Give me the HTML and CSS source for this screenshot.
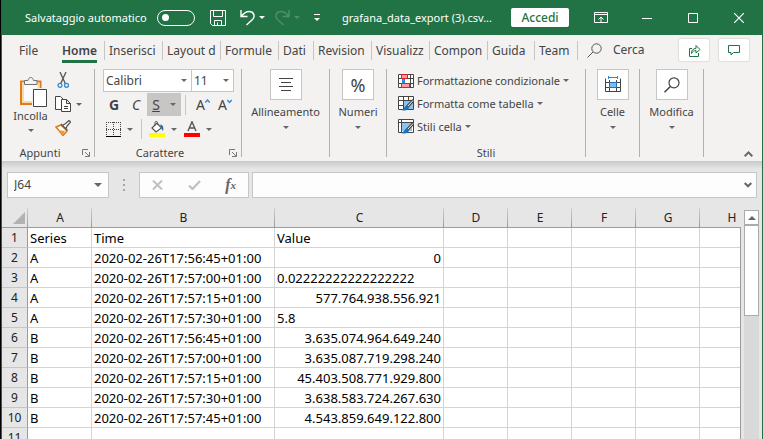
FILE: index.html
```html
<!DOCTYPE html>
<html lang="it">
<head>
<meta charset="utf-8">
<meta name="viewport" content="width=device-width, initial-scale=1">
<title>grafana_data_export (3).csv</title>
<link rel="stylesheet" href="styles.css">
</head>
<body>
<div class="app">
  <header class="titlebar">
    <label class="autosave" for="autosave">Salvataggio automatico</label>
    <input class="toggle" type="checkbox" id="autosave">
    <div class="quick">
      <button class="icon-btn save" aria-label="Salva"><svg width="16" height="16" viewBox="0 0 16 16" fill="none" stroke="#fff"><path d="M.5 .5h15v15h-13l-2-2zM3.500 .5v6h9v-6M4.500 15.500v-5h7v5M7.500 15.500v-3"/></svg></button>
      <button class="icon-btn undo" aria-label="Annulla"><svg width="15" height="17" viewBox="0 0 15 17" fill="none" stroke="#fff" stroke-width="1.400"><path d="M1 1v6.500h6.500M1.500 7C4 4 6 2.500 9 2.500c5 0 6.500 5 3.500 8L6.500 16"/></svg><span class="caret"></span></button>
      <button class="icon-btn redo" aria-label="Ripristina"><svg width="15" height="17" viewBox="0 0 15 17" fill="none" stroke="#4f9069" stroke-width="1.400"><path d="M14 1v6.500H7.500M13.500 7C11 4 9 2.500 6 2.500c-5 0-6.500 5-3.500 8L8.500 16"/></svg><span class="caret"></span></button>
      <button class="icon-btn custom" aria-label="Personalizza"><svg width="6" height="8" viewBox="0 0 6 8"><path d="M0 0h6v1H0zM0 4h6L3 7z" fill="#fff"/></svg></button>
    </div>
    <h1 class="doc">grafana_data_export (3).csv...</h1>
    <button class="signin">Accedi</button>
    <div class="winctl">
      <button aria-label="Opzioni barra multifunzione"><svg width="14" height="12" viewBox="0 0 14 12" fill="none" stroke="#fff"><path d="M.5 .5h13v10H.5zM0 2.500h14M7 10V5M4.500 7.500L7 5l2.500 2.500"/></svg></button>
      <button aria-label="Riduci a icona"><svg width="10" height="10" viewBox="0 0 10 10" stroke="#fff"><path d="M0 5.500h10"/></svg></button>
      <button aria-label="Ingrandisci"><svg width="10" height="10" viewBox="0 0 10 10" fill="none" stroke="#fff"><path d="M.5 .5h9v9h-9z"/></svg></button>
      <button aria-label="Chiudi"><svg width="10" height="10" viewBox="0 0 10 10" stroke="#fff" stroke-width="1.200"><path d="M0 0l10 10M10 0L0 10"/></svg></button>
    </div>
  </header>

  <nav class="tabs">
    <a class="tab file" href="#file">File</a>
    <a class="tab home" href="#home" aria-current="page"><span>Home</span></a>
    <a class="tab mid" href="#inserisci">Inserisci</a>
    <a class="tab mid" href="#layout">Layout d</a>
    <a class="tab mid" href="#formule">Formule</a>
    <a class="tab dati" href="#dati">Dati</a>
    <a class="tab mid" href="#revisione">Revision</a>
    <a class="tab mid" href="#visualizza">Visualizz</a>
    <a class="tab mid" href="#componenti">Compon</a>
    <a class="tab guida" href="#guida">Guida</a>
    <a class="tab team" href="#team">Team</a>
    <button class="search"><svg width="15" height="15" viewBox="0 0 15 15" fill="none" stroke="#555"><circle cx="9.500" cy="5.500" r="4.700"/><path d="M6 9L.5 14.500"/></svg>Cerca</button>
    <div class="actions">
      <button aria-label="Condividi"><svg width="13" height="13" viewBox="0 0 13 13" fill="none" stroke="#217346"><path d="M4 4.500H1.500v8h9V9M3.500 9.500C3.500 6 5 4.500 8 4.500V1.500L12 5.500 8 9V6.500C6 6.500 4.500 7.500 3.500 9.500z"/></svg></button>
      <button aria-label="Commenti"><svg width="12" height="11" viewBox="0 0 12 11" fill="none" stroke="#217346"><path d="M.5 .5h11v7H5.500L3 10V7.500H.5z"/></svg></button>
    </div>
  </nav>

  <section class="ribbon" aria-label="Home">
    <div class="group clip">
      <div class="clip-body">
        <button class="paste">
          <svg width="29" height="31" viewBox="0 0 29 31" fill="none"><path d="M2 5.500h19.500V28H2z" fill="#fbfbfb" stroke="#e07b1a" stroke-width="2"/><path d="M4 7.500h15.500V26H4z" stroke="#fbd9a4" stroke-width="2"/><path d="M5.500 8.500v-4h3.500C9.500 .5 14 .5 14.500 4.500H18v4z" fill="#f3f2f1" stroke="#737373"/><path d="M13 12h15v19H13z" fill="#f3f2f1"/><path d="M14.500 13.500h13v17h-13z" fill="#fff" stroke="#444"/></svg>
          <span>Incolla</span><span class="caret"></span>
        </button>
        <div class="clip-tools">
          <button aria-label="Taglia"><svg width="16" height="16" viewBox="0 0 16 16" fill="none"><path d="M5 0l5.500 12M11 0L5.500 12" stroke="#555" stroke-width="1.300"/><circle cx="5" cy="13.300" r="2" stroke="#2b88d8" stroke-width="1.200"/><circle cx="11.500" cy="13.300" r="2" stroke="#2b88d8" stroke-width="1.200"/></svg></button>
          <button aria-label="Copia"><svg width="16" height="16" viewBox="0 0 16 16" fill="#fff" stroke="#444"><path d="M.5 .5h5L8 3v10.500H.5z"/><path d="M6.500 3.500h5l4 4v8h-9zM11.500 3.500v4h4M9 10.500h4M9 12.500h4"/></svg><span class="caret"></span></button>
          <button aria-label="Copia formato"><svg width="16" height="16" viewBox="0 0 16 16"><path d="M1 7l5-2 6 6-4 4.500z" fill="#fff" stroke="#e07b1a" stroke-width="1.500"/><path d="M3 10l7 1-2 4z" fill="#f09a38"/><path d="M6 4l6.500 6.500M8 5l2-1 4-3.500L15.500 2 12 6l-1 2.500" fill="#fff" stroke="#555" stroke-width="1.300"/></svg></button>
        </div>
      </div>
      <footer><span>Appunti</span><button class="launch" aria-label="Appunti, altre opzioni"><svg width="8" height="8" viewBox="0 0 8 8" fill="none" stroke="#777"><path d="M.5 6V.5H6M3 3l4 4M7.500 3v4.500H3"/></svg></button></footer>
    </div>

    <div class="group font">
      <div class="selects">
        <span class="pick face"><select aria-label="Tipo di carattere"><option>Calibri</option></select><span class="caret"></span></span>
        <span class="pick size"><select aria-label="Dimensione"><option>11</option></select><span class="caret"></span></span>
      </div>
      <div class="row">
        <button class="fmt bold">G</button>
        <button class="fmt italic">C</button>
        <button class="fmt under"><u>S</u><span class="caret"></span></button>
        <span class="bar"></span>
        <button class="fmt" aria-label="Aumenta dimensione"><span>A</span><svg width="5" height="12" viewBox="0 0 5 12" fill="none" stroke="#2b88d8" stroke-width="1.300"><path d="M.3 3.500L2.500 1l2.200 2.500"/></svg></button>
        <button class="fmt" aria-label="Riduci dimensione"><span>A</span><svg width="5" height="12" viewBox="0 0 5 12" fill="none" stroke="#2b88d8" stroke-width="1.300"><path d="M.3 1L2.500 3.500 4.700 1"/></svg></button>
      </div>
      <div class="row colors">
        <button class="tool" aria-label="Bordi"><svg width="15" height="15" viewBox="0 0 15 15" stroke="#444"><path d="M0 .5h15M0 7.500h15M.5 0v14M7.500 0v14M14.500 0v14" stroke-dasharray="1 1"/><path d="M0 14.500h15" stroke="#000"/></svg><span class="caret"></span></button>
        <span class="bar"></span>
        <button class="tool" aria-label="Colore riempimento"><svg width="16" height="16" viewBox="0 0 16 16" fill="none"><path d="M3 7l5-5 4.500 5L7 11z" fill="#fff" stroke="#555" stroke-width="1.200"/><path d="M6 5V1.500C6 0 8.500 0 8.500 1.500V4" stroke="#555"/><path d="M11 3.500c3 0 4 3 3 6.500-1.500-1-1.500-4-3-6.500z" fill="#1f6fb5"/><path d="M0 12h16v4H0z" fill="#ff0"/></svg><span class="caret"></span></button>
        <button class="tool" aria-label="Colore carattere"><svg width="16" height="16" viewBox="0 0 16 16"><path d="M4 10L8 .8 12 10M5.300 7h5.400" fill="none" stroke="#555" stroke-width="1.400"/><path d="M0 12h16v4H0z" fill="#f00"/></svg><span class="caret"></span></button>
      </div>
      <footer><span>Carattere</span><button class="launch" aria-label="Carattere, altre opzioni"><svg width="8" height="8" viewBox="0 0 8 8" fill="none" stroke="#777"><path d="M.5 6V.5H6M3 3l4 4M7.500 3v4.500H3"/></svg></button></footer>
    </div>

    <button class="group big align"><i class="tile"><svg width="14" height="13" viewBox="0 0 14 13" stroke="#444"><path d="M0 .5h14M2 4.500h10M0 8.500h14M2 12.500h10"/></svg></i>Allineamento<span class="caret"></span></button>
    <button class="group big number"><i class="tile percent">%</i>Numeri<span class="caret"></span></button>

    <div class="group styles">
      <div class="style-list">
        <button><svg width="16" height="14" viewBox="0 0 16 14" fill="none"><path d="M.5 .5h15v13H.5zM.5 4.500h15M.5 9.500h15M12.500 .5v13" fill="#fff" stroke="#444"/><path d="M3.500 .5h6v4h-6zM3.500 9.500h8v4h-8z" fill="#ff9a9a" stroke="#e02020"/><path d="M4 5h3v4H4z" fill="#2b88d8"/></svg>Formattazione condizionale<span class="caret"></span></button>
        <button><svg width="16" height="15" viewBox="0 0 16 15" fill="none"><path d="M.5 .5h15v13H.5zM.5 4.500h15M.5 9.500h15M5.500 .5v13M10.500 .5v13" fill="#fff" stroke="#444"/><path d="M6 5h9v8H6z" fill="#8cc4ef"/><path d="M15.500 4L9 11" stroke="#444" stroke-width="3"/><path d="M15 4.500L9 11" stroke="#fff"/><path d="M9.500 9.500c-3 0-3 3-6 4.500 4 1.500 7.500 0 7.500-3z" fill="#1c72bd"/></svg>Formatta come tabella<span class="caret"></span></button>
        <button><svg width="16" height="15" viewBox="0 0 16 15" fill="none"><path d="M.5 .5h15v13H.5zM.5 3.500h15M3.500 .5v13" fill="#fff" stroke="#444"/><path d="M4 4h10v8H4z" fill="#8cc4ef"/><path d="M15.500 4L9 11" stroke="#444" stroke-width="3"/><path d="M15 4.500L9 11" stroke="#fff"/><path d="M9.500 9.500c-3 0-3 3-6 4.500 4 1.500 7.500 0 7.500-3z" fill="#1c72bd"/></svg>Stili cella<span class="caret"></span></button>
      </div>
      <footer><span>Stili</span></footer>
    </div>

    <button class="group big cells"><i class="tile"><svg width="16" height="17" viewBox="0 0 16 17" fill="none"><path d="M3.500 0v3M12.500 0v3M3.500 1.500h9" stroke="#2b88d8"/><path d="M.5 2.500v13h15v-13M.5 6.500h15M.5 11.500h15M4.500 4v12M11.500 4v12" stroke="#444"/><path d="M4.500 6.500h7v5h-7z" fill="#7fbdf0" stroke="#1c72bd"/></svg></i>Celle<span class="caret"></span></button>
    <button class="group big edit"><i class="tile"><svg width="16" height="16" viewBox="0 0 16 16" fill="none" stroke="#444"><circle cx="10" cy="5.800" r="5" stroke-width="1.200"/><path d="M6.300 9.500L.5 15.300" stroke-width="1.600"/></svg></i>Modifica<span class="caret"></span></button>
    <button class="collapse" aria-label="Comprimi"><svg width="9" height="6" viewBox="0 0 9 6" fill="none" stroke="#666" stroke-width="2"><path d="M.7 5.200L4.500 1.400l3.800 3.800"/></svg></button>
  </section>

  <section class="formula">
    <span class="namebox"><input aria-label="Casella nome" value="J64"><span class="caret"></span></span>
    <svg class="grip" width="2" height="12" viewBox="0 0 2 12" fill="#a6a6a6"><path d="M0 0h2v2H0zM0 5h2v2H0zM0 10h2v2H0z"/></svg>
    <div class="fx">
      <button aria-label="Annulla"><svg width="11" height="10" viewBox="0 0 11 10" stroke="#c0c0c0" stroke-width="2"><path d="M1 .5l9 9M10 .5l-9 9"/></svg></button>
      <button aria-label="Invio"><svg width="13" height="10" viewBox="0 0 13 10" fill="none" stroke="#c0c0c0" stroke-width="2.200"><path d="M1 5.500L4.500 9 12 1"/></svg></button>
      <button class="fn" aria-label="Inserisci funzione">f<sub>x</sub></button>
    </div>
    <span class="entry"><input aria-label="Barra della formula"><svg width="8" height="6" viewBox="0 0 8 6" fill="none" stroke="#666" stroke-width="2"><path d="M.7 1L4 4.300 7.300 1"/></svg></span>
  </section>

  <main class="sheet">
    <div class="grid">
      <table>
        <colgroup><col class="c-num"><col class="c-std"><col class="c-time"><col class="c-val"><col class="c-std"><col class="c-std"><col class="c-std"><col class="c-std"><col class="c-std"></colgroup>
        <thead><tr><th class="corner"><svg width="12" height="12" viewBox="0 0 12 12"><path d="M12 0v12H0z" fill="#b2b2b2"/></svg></th><th>A</th><th>B</th><th>C</th><th>D</th><th>E</th><th>F</th><th>G</th><th>H</th></tr></thead>
        <tbody>
          <tr><th>1</th><td>Series</td><td>Time</td><td>Value</td><td></td><td></td><td></td><td></td><td></td></tr>
          <tr><th>2</th><td>A</td><td>2020-02-26T17:56:45+01:00</td><td class="num">0</td><td></td><td></td><td></td><td></td><td></td></tr>
          <tr><th>3</th><td>A</td><td>2020-02-26T17:57:00+01:00</td><td>0.02222222222222222</td><td></td><td></td><td></td><td></td><td></td></tr>
          <tr><th>4</th><td>A</td><td>2020-02-26T17:57:15+01:00</td><td class="num">577.764.938.556.921</td><td></td><td></td><td></td><td></td><td></td></tr>
          <tr><th>5</th><td>A</td><td>2020-02-26T17:57:30+01:00</td><td>5.8</td><td></td><td></td><td></td><td></td><td></td></tr>
          <tr><th>6</th><td>B</td><td>2020-02-26T17:56:45+01:00</td><td class="num">3.635.074.964.649.240</td><td></td><td></td><td></td><td></td><td></td></tr>
          <tr><th>7</th><td>B</td><td>2020-02-26T17:57:00+01:00</td><td class="num">3.635.087.719.298.240</td><td></td><td></td><td></td><td></td><td></td></tr>
          <tr><th>8</th><td>B</td><td>2020-02-26T17:57:15+01:00</td><td class="num">45.403.508.771.929.800</td><td></td><td></td><td></td><td></td><td></td></tr>
          <tr><th>9</th><td>B</td><td>2020-02-26T17:57:30+01:00</td><td class="num">3.638.583.724.267.630</td><td></td><td></td><td></td><td></td><td></td></tr>
          <tr><th>10</th><td>B</td><td>2020-02-26T17:57:45+01:00</td><td class="num">4.543.859.649.122.800</td><td></td><td></td><td></td><td></td><td></td></tr>
          <tr><th>11</th><td></td><td></td><td></td><td></td><td></td><td></td><td></td><td></td></tr>
        </tbody>
      </table>
    </div>
    <div class="scroll">
      <button class="up" aria-label="Scorri in alto"><svg width="8" height="4" viewBox="0 0 8 4"><path d="M4 0l4 4H0z" fill="#666"/></svg></button>
      <div class="thumb"></div>
    </div>
  </main>
</div>
</body>
</html>
```
FILE: styles.css
```css
* { box-sizing: border-box; }
body { margin: 0; font: 12px/16px "Noto Sans", "Open Sans", sans-serif; color: #444; }
button, input, select { font: inherit; color: inherit; border: 0; padding: 0; margin: 0; background: none; }
button { display: flex; align-items: center; justify-content: center; white-space: nowrap; }
svg { display: block; flex: none; }
a { color: inherit; text-decoration: none; }

.app { height: 100vh; display: flex; flex-direction: column; overflow: hidden; background: #e6e6e6; border-left: 1px solid #000; border-right: 1px solid #217346; }
.app > * { border-left: 1px solid #1d6b40; }
.caret { flex: none; border: 3px solid transparent; border-top-color: #666; border-bottom: 0; }

/* Title bar */
.titlebar { flex: none; height: 35px; background: #217346; color: #fff; display: flex; align-items: center; padding-left: 23px; }
.autosave { width: 132px; white-space: nowrap; font-size: 11px; }
.toggle { appearance: none; width: 38px; height: 16px; border: 1px solid #fff; border-radius: 8px; display: flex; align-items: center; padding-left: 4px; }
.toggle::before { content: ""; width: 7px; height: 7px; border-radius: 50%; background: #fff; }
.quick { display: flex; align-items: center; margin-left: 15px; }
.quick .caret { border-top-color: #fff; margin-left: 4px; }
.quick .redo .caret { border-top-color: #4f9069; }
.undo { margin-left: 14px; }
.redo { margin-left: 10px; }
.custom { margin-left: 14px; }
.doc { margin: 0 0 0 22px; font: inherit; font-size: 11px; flex: 1; white-space: nowrap; }
.signin { background: #fff; color: #217346; width: 58px; height: 19px; border-radius: 2px; font-weight: 500; }
.winctl { display: flex; margin-left: 9px; }
.winctl button { width: 46px; height: 34px; }

/* Tabs */
.tabs { flex: none; height: 30px; background: #f3f2f1; display: flex; align-items: center; }
.tab { height: 19px; line-height: 19px; border-right: 1px solid #c8c6c4; padding-left: 4px; white-space: nowrap; overflow: hidden; }
.mid { width: 58px; }
.tab.file { width: 58px; padding-left: 17px; border: 0; }
.tab.home { width: 45px; padding-left: 2px; font-weight: 600; overflow: visible; }
.home span { display: inline-block; height: 22px; border-bottom: 3px solid #217346; }
.dati { width: 35px; }
.guida { width: 47px; }
.team { width: 43px; }
.search { gap: 11px; margin-left: 9px; }
.actions { display: flex; gap: 10px; margin: 0 13px 0 auto; }
.actions button { width: 30px; height: 22px; background: #fff; border-radius: 2px; box-shadow: 0 0 1px 1px #e1dfdd; }

/* Ribbon */
.ribbon { flex: none; height: 96px; padding: 4px 0; background: #f3f2f1; display: flex; font-size: 11px; }
.group { flex: none; height: 88px; border-right: 1px solid #b3b0ad; position: relative; display: flex; flex-direction: column; }
.group footer { margin-top: auto; height: 8px; display: flex; align-items: center; justify-content: center; }
.clip footer, .font footer { padding-right: 16px; }
.font footer { padding-right: 24px; }
.launch { position: absolute; right: 4px; bottom: 0; }
.clip { width: 93px; }
.clip-body { display: flex; }
.paste { flex: none; flex-direction: column; padding: 3px 0 0 9px; width: 48px; }
.paste svg { margin-left: 5px; }
.paste span:first-of-type { margin-top: 1px; }
.paste .caret { margin-top: 5px; }
.clip-tools { display: flex; flex-direction: column; gap: 8px; padding: 3px 0 0 5px; }
.clip-tools button { gap: 5px; justify-content: flex-start; }

.font { width: 147px; padding-left: 8px; }
.selects { display: flex; font-size: 12px; }
.pick { height: 23px; background: #fff; border: 1px solid #c8c6c4; display: flex; align-items: center; padding: 0 4px 0 2px; }
.pick select { appearance: none; flex: 1; min-width: 0; }
.face { width: 89px; }
.size { width: 43px; margin-left: -1px; }
.row { display: flex; align-items: center; height: 23px; margin-top: 1px; }
.fmt { width: 22px; height: 23px; font-size: 14px; }
.bold { font-weight: 700; }
.italic { font-style: italic; }
.under { width: 34px; background: #c8c6c4; gap: 10px; }
.bar { width: 1px; height: 20px; background: #c8c6c4; margin: 0 6px 0 4px; }
.colors { padding-left: 3px; height: 24px; }
.tool { gap: 6px; }
.colors .bar { margin: 0 7px 0 8px; }
.colors .tool + .tool { margin-left: 7px; }

.big { justify-content: flex-start; }
.tile { width: 32px; height: 31px; background: #fff; border: 1px solid #c8c6c4; display: flex; align-items: center; justify-content: center; margin-bottom: 4px; font-style: normal; }
.percent { font-size: 18px; }
.big .caret { margin-top: 6px; }
.align { width: 88px; }
.number { width: 57px; }
.styles { width: 199px; padding-left: 11px; padding-right: 11px; }
.style-list button { height: 23px; gap: 3px; }
.cells { width: 54px; }
.edit { width: 64px; }
.collapse { margin: auto 9px 0 auto; }

/* Formula bar */
.formula { flex: none; height: 47px; padding: 11px 5px 10px; display: flex; align-items: center; background: linear-gradient(#c9c9c9, #e6e6e6 8px); }
.namebox, .fx, .entry { height: 26px; background: #fdfdfd; border: 1px solid #c6c6c6; display: flex; align-items: center; }
.namebox { width: 102px; padding: 0 6px; }
.namebox input { flex: 1; min-width: 0; }
.namebox .caret { border-width: 4px 4px 0; }
.grip { margin: 0 14px; }
.fx { width: 110px; justify-content: space-between; padding: 0 12px; }
.fn { color: #666; font: italic 700 16px/20px "Liberation Serif", serif; }
.fn sub { font-size: 11px; vertical-align: baseline; }
.entry { flex: 1; margin-left: 3px; padding-right: 4px; }
.entry input { flex: 1; min-width: 0; padding: 0 6px; }

/* Worksheet */
.sheet { flex: 1; min-height: 0; display: flex; }
.grid { flex: 1; min-width: 0; overflow: hidden; position: relative; }
.grid::after { content: ""; position: absolute; top: 19px; right: 0; bottom: 0; width: 1px; background: #9b9b9b; }
table { table-layout: fixed; width: 762px; border-spacing: 0; color: #000; font: 13px/18px "Noto Sans", sans-serif; }
.c-num { width: 26px; }
.c-std { width: 64px; }
.c-time { width: 183px; }
.c-val { width: 169px; }
th { font-size: 12px; font-weight: 400; padding: 1px 0 0; height: 20px; border-right: 1px solid #9b9b9b; border-bottom: 1px solid #c6c6c6; background: #e6e6e6; color: #222; }
thead th { border-bottom-color: #9b9b9b; border-right: 0; background: linear-gradient(#d0d0d0, #9b9b9b) right / 1px 100% no-repeat #e6e6e6; }
.corner svg { margin-left: 11px; }
td { padding: 1px 2px 0; height: 20px; border-right: 1px solid #d4d4d4; border-bottom: 1px solid #d4d4d4; background: #fff; white-space: nowrap; }
.num { text-align: right; }
.scroll { flex: none; width: 15px; margin: 2px 3px 0; background: #d9d9d9; display: flex; flex-direction: column; }
.up { width: 15px; height: 15px; background: #fff; border: 1px solid #ababab; }
.thumb { height: 91px; background: #fff; border: 1px solid #ababab; }
```
